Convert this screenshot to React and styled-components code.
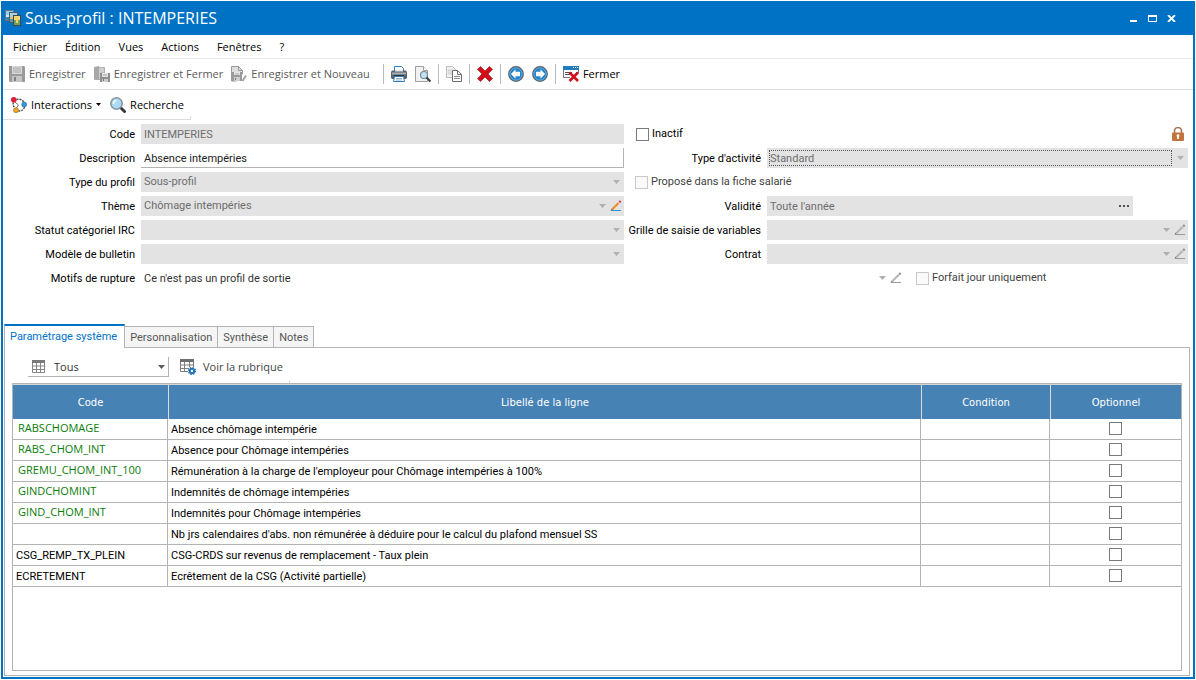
import React from 'react';
import styled, { createGlobalStyle, css } from 'styled-components';

const blue = '#0072c6';
const line = '#b4b4b4';
const softLine = '#dcdcdc';
const fieldGrey = '#e3e3e3';
const uiFont = '"Open Sans", "Liberation Sans", sans-serif';
const formFont = 'Roboto, "Liberation Sans", sans-serif';

const GlobalStyle = createGlobalStyle`
  * { box-sizing: border-box; }
  body { margin: 0; background: #fff; font: 11px/16px ${formFont}; color: #000; }
  button, input, select { font: inherit; color: inherit; margin: 0; }
  button { border: 0; background: none; padding: 0; white-space: nowrap; }
  svg { display: block; flex: none; }
`;

const Page = styled.div`
  min-height: 100vh;
  padding: 1px;
  display: flex;
`;
const Window = styled.div`
  flex: 1;
  min-width: 0;
  display: flex;
  flex-direction: column;
  border: 2px solid ${blue};
  border-top: 0;
`;

const TitleBar = styled.header`
  height: 34px;
  flex: none;
  display: flex;
  align-items: center;
  gap: 4px;
  padding: 0 12px 0 2px;
  background: ${blue};
  color: #fff;
`;
const Title = styled.h1`
  flex: 1;
  margin: 0;
  font: 400 16px/20px ${uiFont};
`;
const ControlRow = styled.div`
  display: flex;
`;
const WindowButton = styled.button`
  width: 19px;
  height: 20px;
  display: grid;
  place-items: center;
`;

const MenuBar = styled.nav`
  height: 24px;
  flex: none;
  display: flex;
  align-items: center;
  gap: 2px;
  padding-left: 2px;
  border-bottom: 1px solid #ebebeb;
  font-family: ${uiFont};
`;
const MenuItem = styled.button`
  padding: 0 8px;
`;

const ToolBar = styled.div`
  height: 31px;
  flex: none;
  display: flex;
  align-items: center;
  gap: 8px;
  padding-left: 6px;
  border-bottom: 1px solid ${softLine};
  font-family: ${uiFont};
`;
const LinksBar = styled.div`
  position: relative;
  height: 30px;
  width: 188px;
  flex: none;
  display: flex;
  align-items: center;
  gap: 9px;
  padding-left: 8px;
  border-bottom: 1px solid ${softLine};
  font-family: ${uiFont};
`;
const EdgeTick = styled.i`
  position: absolute;
  right: 0;
  bottom: 0;
  height: 3px;
  border-right: 1px solid ${softLine};
`;
const ToolButton = styled.button`
  display: flex;
  align-items: center;
  gap: ${p => p.$gap || 4}px;
  color: ${p => (p.$color || '#000')};
`;
const Separator = styled.span`
  width: 1px;
  height: 20px;
  background: #bcbcbc;
`;
const ToolGroup = styled.div`
  display: flex;
  align-items: center;
  gap: 7px;
  padding-left: 5px;
`;
const ToolPair = styled.div`
  display: flex;
  gap: 8px;
`;

const Form = styled.form`
  flex: none;
  display: grid;
  grid-template-columns: 132px minmax(0, 483fr) 131px minmax(0, 421fr);
  grid-auto-rows: 20px;
  gap: 4px 6px;
  padding: 4px 5px 36px 0;
`;
const Label = styled.label`
  display: flex;
  align-items: center;
  justify-content: flex-end;
  padding-top: 2px;
  white-space: nowrap;
`;
const Field = styled.div`
  display: flex;
  align-items: center;
  min-width: 0;
  background: ${fieldGrey};
  color: #6d6d6d;
  padding-right: ${p => p.$end || 3}px;
  ${p => p.$plain && css`
    background: #fff;
    color: #333;
  `}
  ${p => p.$editable && css`
    padding-top: 1px;
    background: #fff;
    color: #222;
    border: solid ${line};
    border-width: 0 1px 1px 0;
  `}
  ${p => p.$short && css`margin-right: 55px;`}
`;
const bareControl = css`
  flex: 1;
  min-width: 0;
  height: 18px;
  padding: 0 0 0 3px;
  border: 0;
  outline: 0;
  background: transparent;
  appearance: none;
  opacity: 1;
`;
const TextInput = styled.input`${bareControl}`;
const Select = styled.select`
  ${bareControl}
  ${p => p.$focused && css`
    height: 16px;
    margin: 0 5px 0 2px;
    padding-left: 0;
    border: 1px dotted #555;
  `}
`;
const FieldTools = styled.div`
  display: flex;
  align-items: center;
  gap: 4px;
`;
const WideRow = styled.div`
  grid-column: 2 / -1;
  display: grid;
  grid-template-columns: minmax(0, 763fr) minmax(0, 284fr);
`;
const CheckRow = styled.div`
  grid-column: ${p => (p.$span ? 'span 2' : 'auto')};
  display: flex;
  align-items: center;
  justify-content: space-between;
  padding: 0 4px 0 ${p => p.$lead || 5}px;
`;
const CheckLabel = styled.label`
  display: flex;
  align-items: center;
  gap: 3px;
  white-space: nowrap;
  color: ${p => (p.$muted ? '#3f3f3f' : '#000')};
`;
const CheckBox = styled.input.attrs({ type: 'checkbox' })`
  appearance: none;
  width: 13px;
  height: 13px;
  flex: none;
  border: 1px solid #7a7a7a;
  background: #fff;
  &:disabled {
    border-color: #c9c9c9;
    background: #fafafa;
  }
`;

const Tabs = styled.div`
  flex: none;
  display: flex;
  align-items: flex-end;
  padding-left: 1px;
`;
const Tab = styled.button`
  height: 21px;
  padding: 1px 5px 0;
  border: 1px solid ${line};
  border-width: 1px 1px 0 0;
  background: #f5f5f5;
  color: #555;
  ${p => p.$active && css`
    position: relative;
    height: 24px;
    margin-bottom: -1px;
    padding: 0 7px 0 5px;
    border-left-width: 1px;
    border-top: 2px solid ${blue};
    background: #fff;
    color: ${blue};
  `}
`;
const TabPanel = styled.section`
  flex: 1;
  display: flex;
  flex-direction: column;
  margin: 0 3px 1px 1px;
  padding: 0 7px 4px 7px;
  border: 1px solid ${line};
`;
const PanelTools = styled.div`
  position: relative;
  flex: none;
  align-self: flex-start;
  height: 35px;
  display: flex;
  align-items: flex-start;
  gap: 11px;
  padding: 9px 7px 0 16px;
  font-family: ${uiFont};
`;
const Filter = styled.div`
  width: 141px;
  height: 20px;
  display: flex;
  align-items: center;
  gap: 6px;
  padding: 0 3px 0 4px;
  border: solid ${line};
  border-width: 0 1px 1px 0;
  color: #333;
`;
const PanelButton = styled(ToolButton)`
  height: 20px;
`;

const GridFrame = styled.div`
  flex: 1;
  border: 1px solid ${line};
`;
const Grid = styled.table`
  width: 100%;
  table-layout: fixed;
  border-collapse: separate;
  border-spacing: 0;
  border-top: 1px solid #d6d6d6;
`;
const Head = styled.th`
  height: 34px;
  padding: 1px 0 0;
  width: ${p => (p.$w ? `${p.$w}px` : 'auto')};
  background: #4682b4;
  color: #fff;
  font: 400 10px/16px "DejaVu Sans", sans-serif;
  & + & { border-left: 1px solid ${softLine}; }
`;
const Cell = styled.td`
  height: 21px;
  padding: ${p => (p.$link ? 0 : 2)}px 3px 0;
  border: solid ${line};
  border-width: 0 1px 1px 0;
  line-height: 18px;
  white-space: nowrap;
  &:last-child {
    padding: 0 3px 1px;
    border-right: 0;
  }
  input { display: block; margin: 0 auto; }
`;
const CodeLink = styled.a`
  display: block;
  padding: 0 2px 2px;
  color: #0a7d0a;
  font-family: ${uiFont};
  line-height: 16px;
  text-decoration: none;
`;

const Icon = ({ children, s = 16 }) => (
  <svg width={s} height={s} viewBox={`0 0 ${s} ${s}`} fill="none" aria-hidden="true">{children}</svg>
);
const Caret = ({ color = '#b0b0b0' }) => (
  <svg width="7" height="4" viewBox="0 0 7 4" aria-hidden="true"><path d="M0 0h7L3.5 4z" fill={color} /></svg>
);
const Pencil = ({ color }) => (
  <svg width="12" height="12" viewBox="0 0 12 12" fill="none" aria-hidden="true">
    <path d="M2 9.5 8.8 2.8" stroke={color ? '#f08a24' : '#b4b4b4'} strokeWidth="2" />
    <path d="M8.400 3.200 9.600 2" stroke={color ? '#d7dbe0' : '#c8c8c8'} strokeWidth="2" />
    <path d="M9.400 2.200 10.600 1" stroke={color ? '#d8283c' : '#8a8a8a'} strokeWidth="2" />
    <path d="M.6 11 1.3 8.8 2.7 10.2z" fill="#666" />
    <path d="M1 10.500h10" stroke={color ? '#2d8fd0' : '#9a9a9a'} />
  </svg>
);
const AppIcon = () => (
  <Icon>
    <path d="M0 0h9v11H0z" fill="#6a7782" />
    <path d="M1 1h7v4H1z" fill="#8fd0ee" /><path d="M1 5h7v5H1z" fill="#d9e4ea" />
    <path d="M1 7h4v3H1z" fill="#3e86b8" />
    <path d="M4 2h9v11H4z" fill="#4d5a66" />
    <path d="M5 3h7v4H5z" fill="#a9cfe2" /><path d="M5 7h7v5H5z" fill="#e2c55a" />
    <path d="M5 9h3v3H5z" fill="#5d93b5" />
    <path d="M8 5h8v11H8z" fill="#3e4850" />
    <path d="M9 6h6v4H9z" fill="#f0d878" /><path d="M9 10h6v5H9z" fill="#73a15b" />
    <path d="M11 8h2v5h-2z" fill="#f0d060" />
  </Icon>
);
const SaveIcon = () => (
  <Icon>
    <path d="M0 0h15l1 1v15H1l-1-1z" fill="#9a9a9a" />
    <path d="M3 0h10v8H3z" fill="#dadada" />
    <path d="M4 2h8M4 4h8M4 6h8" stroke="#a8a8a8" />
    <path d="M3 10h10v6H3z" fill="#c6c6c6" /><path d="M5 11h2v4H5z" fill="#808080" />
  </Icon>
);
const SaveCloseIcon = () => (
  <Icon>
    <path d="M.5 1.500h10V7H7v6.500H.5z" fill="#cfcfcf" stroke="#b0b0b0" />
    <path d="M0 1 5 0v14l-5-1z" fill="#a8a8a8" />
    <path d="M6 7h10v9H6z" fill="#8f8f8f" />
    <path d="M8 7h6v4H8z" fill="#e4e4e4" /><path d="M9 9h4" stroke="#a8a8a8" />
    <path d="M8 13h6v3H8z" fill="#cecece" /><path d="M9 13h1v2H9z" fill="#777" />
  </Icon>
);
const SaveNewIcon = () => (
  <Icon>
    <path d="M.5.5h7l4 4V8h-6v7h-5z" fill="#dedede" stroke="#9a9a9a" />
    <path d="M7.500.5v4h4" stroke="#9a9a9a" />
    <path d="M1 6h10v9H1z" fill="#9a9a9a" />
    <path d="M3 6h6v3H3z" fill="#e6e6e6" /><path d="M4 8h4" stroke="#aaa" />
    <path d="M3 11h6v4H3z" fill="#cfcfcf" /><path d="M4 12h1v2H4z" fill="#777" />
    <path d="M11.500 15 15 9.500" stroke="#a4a4a4" strokeWidth="2" />
  </Icon>
);
const PrintIcon = () => (
  <Icon>
    <path d="M3.500 5V.5h7l2 2V5" fill="#fff" stroke="#2b7fc0" />
    <path d="M1 4.500h14l1 1.500v6l-1 1H1l-1-1V6z" fill="#5d636a" />
    <path d="M1 6.500h14v2H1z" fill="#a9afb5" />
    <path d="M4 4h8v1.500H4z" fill="#dfe8ef" />
    <path d="M3 9h10v2H3z" fill="#2d3238" />
    <path d="M3.500 10.500h9l1 5h-11z" fill="#fff" stroke="#2b7fc0" />
    <path d="M5 12.500h6M5 14h6" stroke="#9fb3c4" />
  </Icon>
);
const PreviewIcon = () => (
  <Icon>
    <path d="M.5.5h8l4 4v11H.5z" fill="#f1f1f1" stroke="#a0a0a0" />
    <path d="M8.500.5v4h4" fill="#fff" stroke="#a0a0a0" />
    <circle cx="9" cy="9" r="3.500" fill="#bfe2f5" stroke="#7b8791" strokeWidth="1.200" />
    <path d="m11.500 11.500 4 4" stroke="#3b4249" strokeWidth="2.200" />
  </Icon>
);
const CopyIcon = () => (
  <Icon>
    <path d="M.5.5h6l3 3v8h-9z" fill="#f4f4f4" stroke="#b9b9b9" />
    <path d="M2 4h5M2 6h5M2 8h5" stroke="#c4c4c4" />
    <path d="M6.500 4.500h5l4 4v7h-9z" fill="#fff" stroke="#6c6c6c" />
    <path d="M11.500 4.500v4h4" stroke="#6c6c6c" />
    <path d="M8 10.500h6M8 12.500h6" stroke="#8c8c8c" />
  </Icon>
);
const DeleteIcon = () => (
  <Icon>
    <path d="M3.500.5 8 5l4.500-4.500L15.500 3.300 11 8l4.500 4.700-3 2.800L8 11l-4.500 4.500-3-2.800L5 8 .5 3.300z" fill="#d2101c" stroke="#a62a2a" strokeWidth=".8" />
  </Icon>
);
const ArrowIcon = ({ right }) => (
  <Icon>
    <circle cx="8" cy="8" r="7.200" fill="#2385cc" stroke="#56616b" strokeWidth="1.400" />
    <circle cx="8" cy="8" r="6.200" stroke="#76b7e4" strokeWidth=".8" />
    <path d={right ? 'M13 8 8.500 3.300v2.400H4v4.600h4.500v2.400z' : 'M3 8l4.500-4.700v2.400H12v4.600H7.500v2.400z'} fill="#fff" />
  </Icon>
);
const CloseFormIcon = () => (
  <Icon>
    <path d="M0 0h16v4H0z" fill="#1f7dbf" />
    <path d="M10 1.500h1M12 1.500h1M14 1.500h1" stroke="#fff" />
    <path d="M.5 4v7.500H7M15.500 4v3" stroke="#70777d" />
    <path d="M2 6.500h7M2 8.500h5M13 6.500h2" stroke="#4e565c" />
    <path d="m6.500 6.500 8.500 8.500M15 6.500 6.500 15" stroke="#d2101c" strokeWidth="2.600" />
  </Icon>
);
const InteractionsIcon = () => (
  <Icon>
    <path d="M5.500 2.500C9 1.500 12 3 13 6M13.500 10c-1 3-3 4-6 4M2.500 5.500c-1 2 0 4 1.500 6" stroke="#4a4a4a" strokeWidth="1.400" strokeDasharray="2 1" />
    <path d="m4 5 3.500 3L5 11.500" stroke="#777" />
    <circle cx="2.800" cy="2.800" r="2.800" fill="#e01b3c" />
    <circle cx="13.200" cy="7.500" r="2.500" fill="#2a9be0" stroke="#4a6a80" strokeWidth=".6" />
    <circle cx="5" cy="13.200" r="2.500" fill="#f5a81c" stroke="#8b6a30" strokeWidth=".6" />
  </Icon>
);
const SearchIcon = () => (
  <Icon>
    <path d="m10.500 10.500 4 4" stroke="#333a40" strokeWidth="3" strokeLinecap="round" />
    <circle cx="6.500" cy="6.500" r="5.700" fill="#a9dbf7" stroke="#8b949b" strokeWidth="1.600" />
    <path d="M3.500 7a3.200 3.200 0 0 1 3-3.500" stroke="#fff" strokeWidth="1.500" />
  </Icon>
);
const LockIcon = () => (
  <svg width="12" height="14" viewBox="0 0 12 14" fill="none" aria-hidden="true">
    <path d="M2.500 7V4a3.500 3.500 0 0 1 7 0v3" stroke="#a9724f" strokeWidth="1.600" />
    <rect y="5.500" width="12" height="8.500" rx="1" fill="#c0743f" />
    <path d="M6 7.200a1.500 1.500 0 0 1 .8 2.700V12H5.200V9.900A1.500 1.500 0 0 1 6 7.200z" fill="#fff" />
  </svg>
);
const TableIcon = () => (
  <svg width="13" height="13" viewBox="0 0 13 13" fill="none" aria-hidden="true">
    <path d="M0 0h13v3H0z" fill="#7a7a7a" />
    <path d="M.5 3v9.500h12V3M.5 6h12M.5 9.500h12M4.500 3v9M8.500 3v9" stroke="#858585" />
  </svg>
);
const TableGearIcon = () => (
  <Icon>
    <path d="M0 0h14v3H0z" fill="#6e6e6e" />
    <path d="M.5 3v9.500H8M13.500 3v5M.5 6h13M.5 9.500H9M4.500 3v9M9.500 3v5" stroke="#7d7d7d" />
    <circle cx="12" cy="12" r="2.200" fill="#fff" stroke="#1f74b5" strokeWidth="2" />
    <circle cx="12" cy="12" r="3.500" stroke="#1f74b5" strokeWidth="1.200" strokeDasharray="1.400 1.350" />
  </Icon>
);
const Dots = () => (
  <svg width="10" height="2" viewBox="0 0 10 2" aria-hidden="true"><path d="M0 0h2v2H0zM4 0h2v2H4zM8 0h2v2H8z" fill="#4f4f4f" /></svg>
);

const Combo = ({ id, label, value = '', pencil, focused }) => (
  <>
    <Label htmlFor={id}>{label}</Label>
    <Field $end={pencil ? 2 : 4}>
      <Select id={id} disabled $focused={focused}><option>{value}</option></Select>
      <FieldTools>
        <Caret />
        {pencil && <Pencil color={pencil === 'color'} />}
      </FieldTools>
    </Field>
  </>
);

const WindowControls = () => (
  <ControlRow>
    <WindowButton aria-label="Réduire"><svg width="7" height="7"><path d="M0 5h7v2H0z" fill="#fff" /></svg></WindowButton>
    <WindowButton aria-label="Agrandir"><svg width="9" height="7" fill="none"><path d="M.5 0v6.500h8V0" stroke="#fff" /><path d="M0 0h9v2H0z" fill="#fff" /></svg></WindowButton>
    <WindowButton aria-label="Fermer la fenêtre"><svg width="9" height="7" fill="none"><path d="M1 0l7 7M8 0 1 7" stroke="#fff" strokeWidth="1.800" /></svg></WindowButton>
  </ControlRow>
);

const rows = [
  ['RABSCHOMAGE', 'Absence chômage intempérie', true],
  ['RABS_CHOM_INT', 'Absence pour Chômage intempéries', true],
  ['GREMU_CHOM_INT_100', "Rémunération à la charge de l'employeur pour Chômage intempéries à 100%", true],
  ['GINDCHOMINT', 'Indemnités de chômage intempéries', true],
  ['GIND_CHOM_INT', 'Indemnités pour Chômage intempéries', true],
  ['', "Nb jrs calendaires d'abs. non rémunérée à déduire pour le calcul du plafond mensuel SS"],
  ['CSG_REMP_TX_PLEIN', 'CSG-CRDS sur revenus de remplacement - Taux plein'],
  ['ECRETEMENT', 'Ecrêtement de la CSG (Activité partielle)'],
];
const menus = ['Fichier', 'Édition', 'Vues', 'Actions', 'Fenêtres', '?'];
const tabs = ['Paramétrage système', 'Personnalisation', 'Synthèse', 'Notes'];

export default function App() {
  return (
    <Page>
      <GlobalStyle />
      <Window>
        <TitleBar>
          <AppIcon />
          <Title>Sous-profil : INTEMPERIES</Title>
          <WindowControls />
        </TitleBar>
        <MenuBar>{menus.map(m => <MenuItem key={m}>{m}</MenuItem>)}</MenuBar>
        <ToolBar>
          <ToolButton $color="#5a5a5a"><SaveIcon />Enregistrer</ToolButton>
          <ToolButton $color="#5a5a5a"><SaveCloseIcon />Enregistrer et Fermer</ToolButton>
          <ToolButton $color="#5a5a5a"><SaveNewIcon />Enregistrer et Nouveau</ToolButton>
          <ToolGroup>
            <Separator />
            <ToolPair>
              <ToolButton aria-label="Imprimer"><PrintIcon /></ToolButton>
              <ToolButton aria-label="Aperçu"><PreviewIcon /></ToolButton>
            </ToolPair>
            <Separator />
            <ToolButton aria-label="Copier"><CopyIcon /></ToolButton>
            <Separator />
            <ToolButton aria-label="Supprimer"><DeleteIcon /></ToolButton>
            <Separator />
            <ToolPair>
              <ToolButton aria-label="Précédent"><ArrowIcon /></ToolButton>
              <ToolButton aria-label="Suivant"><ArrowIcon right /></ToolButton>
            </ToolPair>
            <Separator />
            <ToolButton><CloseFormIcon />Fermer</ToolButton>
          </ToolGroup>
        </ToolBar>
        <LinksBar>
          <ToolButton>
            <InteractionsIcon />Interactions
            <svg width="5" height="3" viewBox="0 0 5 3" aria-hidden="true"><path d="M0 0h5L2.500 3z" fill="#000" /></svg>
          </ToolButton>
          <ToolButton><SearchIcon />Recherche</ToolButton>
          <EdgeTick />
        </LinksBar>
        <Form onSubmit={e => e.preventDefault()}>
          <Label htmlFor="code">Code</Label>
          <Field><TextInput id="code" disabled defaultValue="INTEMPERIES" /></Field>
          <CheckRow $span $lead={6}>
            <CheckLabel><CheckBox />Inactif</CheckLabel>
            <LockIcon />
          </CheckRow>

          <Label htmlFor="description">Description</Label>
          <Field $editable><TextInput id="description" defaultValue="Absence intempéries" /></Field>
          <Combo id="activite" label="Type d'activité" value="Standard" focused />

          <Combo id="type" label="Type du profil" value="Sous-profil" />
          <CheckRow $span>
            <CheckLabel $muted><CheckBox disabled />Proposé dans la fiche salarié</CheckLabel>
          </CheckRow>

          <Combo id="theme" label="Thème" value="Chômage intempéries" pencil="color" />
          <Label htmlFor="validite">Validité</Label>
          <Field $short $end={4}>
            <TextInput id="validite" disabled defaultValue="Toute l'année" />
            <button type="button" aria-label="Choisir la validité"><Dots /></button>
          </Field>

          <Combo id="statut" label="Statut catégoriel IRC" />
          <Combo id="grille" label="Grille de saisie de variables" pencil="grey" />
          <Combo id="modele" label="Modèle de bulletin" />
          <Combo id="contrat" label="Contrat" pencil="grey" />

          <Label htmlFor="motifs">Motifs de rupture</Label>
          <WideRow>
            <Field $plain $end={2}>
              <TextInput id="motifs" readOnly defaultValue="Ce n'est pas un profil de sortie" />
              <FieldTools><Caret /><Pencil /></FieldTools>
            </Field>
            <CheckRow $lead={12}>
              <CheckLabel $muted><CheckBox disabled />Forfait jour uniquement</CheckLabel>
            </CheckRow>
          </WideRow>
        </Form>
        <Tabs role="tablist">
          {tabs.map((t, i) => <Tab key={t} role="tab" aria-selected={i === 0} $active={i === 0}>{t}</Tab>)}
        </Tabs>
        <TabPanel role="tabpanel">
          <PanelTools>
            <Filter>
              <TableIcon />
              <Select aria-label="Filtre"><option>Tous</option></Select>
              <Caret color="#5c5c5c" />
            </Filter>
            <PanelButton $gap={7} $color="#444"><TableGearIcon />Voir la rubrique</PanelButton>
            <EdgeTick />
          </PanelTools>
          <GridFrame>
            <Grid>
              <thead>
                <tr>
                  <Head $w={155}>Code</Head>
                  <Head>Libellé de la ligne</Head>
                  <Head $w={129}>Condition</Head>
                  <Head $w={131}>Optionnel</Head>
                </tr>
              </thead>
              <tbody>
                {rows.map(([code, label, linked]) => (
                  <tr key={label}>
                    <Cell $link={linked}>{linked ? <CodeLink href="#">{code}</CodeLink> : code}</Cell>
                    <Cell>{label}</Cell>
                    <Cell />
                    <Cell><CheckBox aria-label={`Optionnel : ${label}`} /></Cell>
                  </tr>
                ))}
              </tbody>
            </Grid>
          </GridFrame>
        </TabPanel>
      </Window>
    </Page>
  );
}
